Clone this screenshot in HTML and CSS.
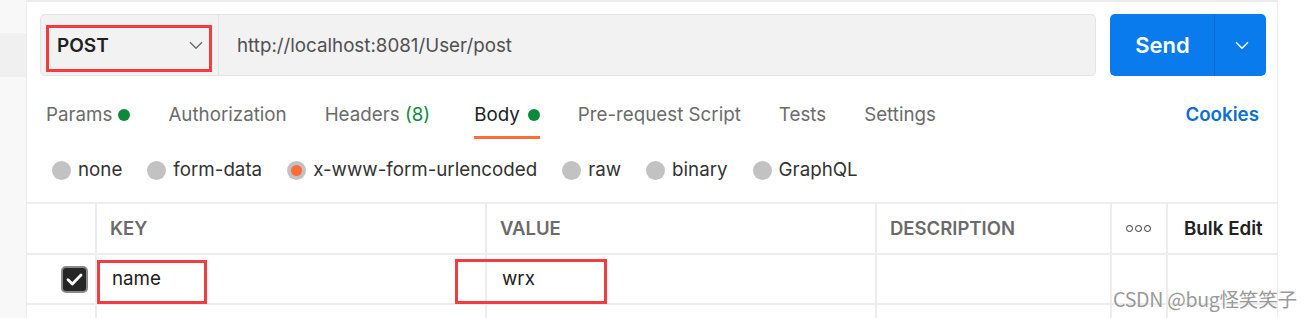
FILE: index.html
```html
<!DOCTYPE html>
<html>
<head>
<meta charset="utf-8">
<link rel="stylesheet" href="styles.css">
</head>
<body>
<div class="app">
  <div class="sidebar"><div class="side-band"></div></div>
  <div class="main">
    <div class="urlrow">
      <div class="urlbox">
        <div class="method">
          <span class="method-name">POST</span>
          <svg class="chev" width="14" height="9" viewBox="0 0 14 9"><path d="M1 1.2 L7 7.2 L13 1.2" fill="none" stroke="#6b6b6b" stroke-width="1.4"/></svg>
        </div>
        <div class="url">http://localhost:8081/User/post</div>
        <div class="mark mark-post"></div>
      </div>
      <div class="send">
        <div class="send-main">Send</div>
        <div class="send-drop"><svg width="14" height="9" viewBox="0 0 14 9"><path d="M1 1.2 L7 7.2 L13 1.2" fill="none" stroke="#fff" stroke-width="1.5"/></svg></div>
      </div>
    </div>

    <div class="tabs">
      <div class="tab">Params<span class="dot d1"></span></div>
      <div class="tab">Authorization</div>
      <div class="tab">Headers <span class="count">(8)</span></div>
      <div class="tab active">Body<span class="dot"></span></div>
      <div class="tab">Pre-request Script</div>
      <div class="tab">Tests</div>
      <div class="tab">Settings</div>
      <div class="cookies">Cookies</div>
    </div>

    <div class="radios">
      <div class="radio"><span class="circle"></span>none</div>
      <div class="radio"><span class="circle"></span>form-data</div>
      <div class="radio"><span class="circle on"></span>x-www-form-urlencoded</div>
      <div class="radio"><span class="circle"></span>raw</div>
      <div class="radio"><span class="circle"></span>binary</div>
      <div class="radio"><span class="circle"></span>GraphQL</div>
    </div>

    <div class="table">
      <div class="row head">
        <div class="cell c1"></div>
        <div class="cell c2">KEY</div>
        <div class="cell c3">VALUE</div>
        <div class="cell c4">DESCRIPTION</div>
        <div class="cell c5"><span class="dots"><i></i><i></i><i></i></span></div>
        <div class="cell c6 bulk">Bulk Edit</div>
      </div>
      <div class="row data">
        <div class="cell c1"><span class="check"><svg width="17" height="13" viewBox="0 0 17 13"><path d="M2 6.8 L6.3 11 L15 2" fill="none" stroke="#fff" stroke-width="2.8" stroke-linecap="round" stroke-linejoin="round"/></svg></span></div>
        <div class="cell c2 val">name</div>
        <div class="cell c3 val">wrx</div>
        <div class="cell c4"></div>
        <div class="cell c5 nb"></div>
        <div class="cell c6"></div>
        <div class="mark mark-name"></div>
        <div class="mark mark-wrx"></div>
      </div>
      <div class="row empty">
        <div class="cell c1"></div>
        <div class="cell c2"></div>
        <div class="cell c3"></div>
        <div class="cell c4"></div>
        <div class="cell c5 nb"></div>
        <div class="cell c6"></div>
      </div>
    </div>
  </div>
</div>
<div class="watermark">CSDN @bug怪笑笑子</div>
</body>
</html>
```

FILE: styles.css
```css
* { box-sizing: border-box; }
html, body { margin: 0; padding: 0; background: #fff; }
body {
  width: 1310px;
  height: 318px;
  overflow: hidden;
  font-family: Inter, "Noto Sans", sans-serif;
  position: relative;
}
.app { display: flex; height: 318px; }
.sidebar {
  width: 27px;
  background: #f8f8f8;
  border-right: 1px solid #ebebeb;
  flex: none;
}
.side-band { margin-top: 33px; height: 44px; background: #f0f0f0; }
.main {
  width: 1251px;
  flex: none;
  border-top: 2px solid #ececec;
  border-right: 1px solid #ebebeb;
}
.urlrow {
  display: flex;
  margin-top: 12px;
  padding-left: 13px;
  gap: 14px;
}
.urlbox {
  position: relative;
  width: 1056px;
  height: 62px;
  border: 1px solid #e4e4e4;
  border-radius: 5px;
  background: #f2f2f2;
  display: flex;
  align-items: center;
}
.method {
  width: 178px;
  height: 100%;
  border-right: 1px solid #e2e2e2;
  display: flex;
  align-items: center;
  padding-left: 16px;
  padding-right: 15px;
}
.method-name {
  font-size: 19px;
  font-weight: 600;
  color: #212121;
  flex: 1;
  margin-top: 1px;
}
.chev { display: block; margin-top: 1px; }
.url {
  padding-left: 18px;
  font-size: 18.75px;
  color: #505050;
}
.mark { position: absolute; border: 3px solid #f43b3f; }
.mark-post { left: 5px; top: 10px; width: 166px; height: 47px; }
.send {
  width: 156px;
  height: 62px;
  background: #097bed;
  border-radius: 5px;
  display: flex;
  color: #fff;
}
.send-main {
  width: 105px;
  border-right: 1px solid #0a6cd0;
  display: flex;
  align-items: center;
  justify-content: center;
  font-size: 22px;
  font-weight: 600;
  padding-left: 1px;
}
.send-drop {
  flex: 1;
  display: flex;
  align-items: center;
  justify-content: center;
}
.send-drop svg { display: block; margin-left: 2px; }

.tabs {
  display: flex;
  align-items: flex-end;
  padding-left: 19px;
  padding-right: 18px;
  margin-top: 14px;
  height: 49px;
}
.tab {
  display: flex;
  align-items: center;
  font-size: 18.75px;
  line-height: 24px;
  color: #6b6b6b;
  padding-bottom: 9px;
  border-bottom: 3px solid transparent;
  margin-right: 38px;
  white-space: pre;
}
.tab.active { color: #212121; border-bottom-color: #ff6c37; margin-left: 6px; }
.count { color: #0f8a3c; }
.dot {
  width: 12px;
  height: 12px;
  border-radius: 50%;
  background: #0c8a3c;
  margin-left: 8px;
}
.dot.d1 { margin-left: 6px; }
.cookies {
  margin-left: auto;
  font-size: 18.75px;
  line-height: 24px;
  font-weight: 600;
  color: #0b6fd6;
  padding-bottom: 12px;
}

.radios {
  display: flex;
  align-items: center;
  padding-left: 25px;
  margin-top: 19px;
  height: 24px;
  gap: 25px;
}
.radio {
  display: flex;
  align-items: center;
  gap: 7px;
  font-size: 18.75px;
  line-height: 24px;
  color: #333;
}
.circle {
  width: 19px;
  height: 19px;
  border-radius: 50%;
  background: #c2c2c2;
  display: flex;
  align-items: center;
  justify-content: center;
}
.circle.on::after {
  content: "";
  width: 11px;
  height: 11px;
  border-radius: 50%;
  background: #ff6c37;
}

.table {
  margin-top: 20px;
  border-top: 2px solid #ededed;
}
.row {
  display: grid;
  grid-template-columns: 70px 390px 390px 235px 56px 109px;
  border-bottom: 2px solid #ededed;
  position: relative;
}
.row.head { height: 51px; }
.row.data { height: 50px; }
.row.empty { height: 13px; border-bottom: none; }
.cell {
  border-right: 2px solid #ededed;
  display: flex;
  align-items: center;
  padding-left: 13px;
}
.cell.c6 { border-right: none; }
.head .cell {
  font-size: 18.5px;
  font-weight: 600;
  color: #6b6b6b;
  padding-bottom: 1px;
}
.head .bulk { color: #212121; padding-left: 16px; font-size: 18.75px; }
.head .c5 { justify-content: center; padding-left: 0; padding-right: 2px; }
.dots { display: flex; gap: 2px; }
.dots i {
  width: 7px;
  height: 7px;
  border: 1.6px solid #333;
  border-radius: 50%;
}
.data .c1 { padding-left: 34px; }
.check {
  width: 27px;
  height: 27px;
  border-radius: 5px;
  background: #262626;
  border: 2px solid #8a8a8a;
  display: flex;
  align-items: center;
  justify-content: center;
}
.check svg { display: block; }
.val {
  font-size: 18.75px;
  color: #212121;
  padding-left: 15px;
  padding-bottom: 2px;
}
.mark-name { left: 70px; top: 5px; width: 110px; height: 44px; }
.mark-wrx { left: 428px; top: 4px; width: 152px; height: 45px; }

.watermark {
  position: absolute;
  left: 1113px;
  top: 285px;
  font-family: "Noto Sans CJK SC", "Noto Sans", sans-serif;
  font-size: 19.6px;
  line-height: 28px;
  color: #9a9a9a;
  white-space: nowrap;
  letter-spacing: -0.3px;
}
```
